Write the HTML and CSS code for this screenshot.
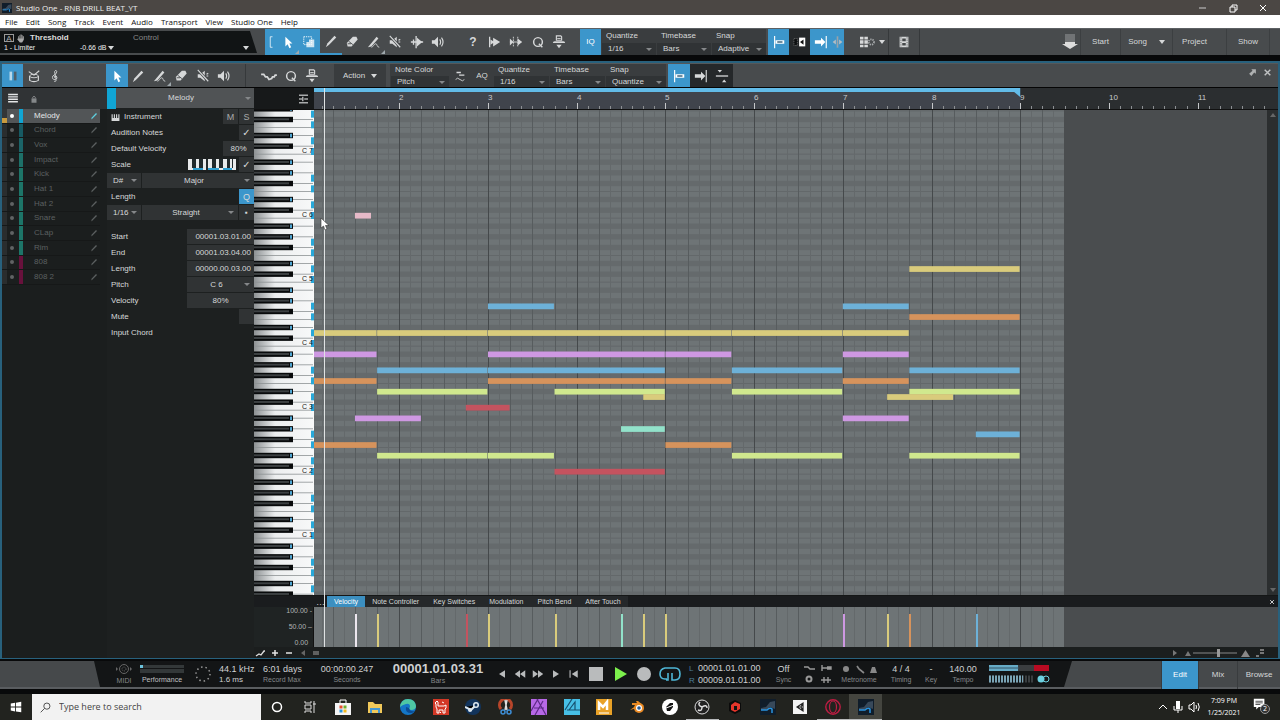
FILE: index.html
```html
<!DOCTYPE html>
<html lang="en">
<head>
<meta charset="utf-8">
<title>Studio One - RNB DRILL BEAT_YT</title>
<link rel="stylesheet" href="styles.css">
</head>
<body>
<svg class="defs" aria-hidden="true">
  <symbol id="arrow" viewBox="0 0 16 16"><path d="M5 2v11l2.6-2.4 2 4.4 2-1-2-4.2H13z" fill="currentColor"/></symbol>
  <symbol id="bracket" viewBox="0 0 16 16"><path d="M10 1H7v14h3" fill="none" stroke="currentColor"/></symbol>
  <symbol id="range" viewBox="0 0 16 16"><path d="M2 2h9v9H2z" fill="none" stroke="currentColor" stroke-dasharray="1.5 1"/><path d="M5 8h3V5h6v9H5z" fill="currentColor" opacity=".75"/></symbol>
  <symbol id="pencil" viewBox="0 0 16 16"><path d="M2 15l2-4.500L12 2l2 2-8.500 8.500z" fill="currentColor"/></symbol>
  <symbol id="eraser" viewBox="0 0 16 16"><path d="M2 9l7-7h4l1.500 3-7 8H3z" fill="currentColor"/><path d="M4 7l5 4M3 10h4" stroke="#45484a" fill="none"/></symbol>
  <symbol id="brush" viewBox="0 0 16 16"><path d="M1 14l10-12 2 2-8 9z" fill="currentColor"/><path d="M5 14c2 0 3-4 5-4s1 4 4 4" fill="none" stroke="currentColor"/></symbol>
  <symbol id="mute" viewBox="0 0 16 16"><path d="M2 6h3l5-4v12l-5-4H2z" fill="currentColor"/><path d="M2 1l12 13" stroke="#45484a" stroke-width="3"/><path d="M2 1l12 13M14 5l-2 1M14 8h-2" stroke="currentColor" stroke-width="1.300"/></symbol>
  <symbol id="speaker" viewBox="0 0 16 16"><path d="M1 6h3l4-4v12l-4-4H1z" fill="currentColor"/><path d="M10 5q2 3 0 6M12 3q3.500 5 0 10" fill="none" stroke="currentColor" stroke-width="1.300"/></symbol>
  <symbol id="split" viewBox="0 0 16 16"><path d="M7 1v14M1 8h14M4 5v6" stroke="currentColor" stroke-width="1.500"/><path d="M8 3l6 5-6 5z" fill="currentColor"/></symbol>
  <symbol id="wave" viewBox="0 0 16 16"><path d="M3 2v12" stroke="currentColor" stroke-width="1.500"/><path d="M4 5l3 2V3l8 5-8 5V9l-3 2z" fill="currentColor"/></symbol>
  <symbol id="wavedot" viewBox="0 0 16 16"><path d="M5 2v12M10 2v12" stroke="currentColor" stroke-dasharray="2 1"/><path d="M1 4l4 4-4 4zM10 4l5 4-5 4z" fill="currentColor"/><path d="M1 8h13" stroke="currentColor"/></symbol>
  <symbol id="q" viewBox="0 0 16 16"><circle cx="8" cy="8" r="5" fill="none" stroke="currentColor" stroke-width="1.700"/><path d="M9 10l4 4" stroke="currentColor" stroke-width="1.700"/></symbol>
  <symbol id="stamp" viewBox="0 0 16 16"><path d="M5 1h5l1 1v4H5z" fill="none" stroke="currentColor" stroke-width="1.300"/><path d="M6 4h4" stroke="currentColor"/><path d="M1 9q0-2 2-2h10q2 0 2 2zM5 11h6l-3 4z" fill="currentColor"/></symbol>
  <symbol id="curve" viewBox="0 0 20 16"><path d="M1 6h3l2 3h2l2 3 3-1 1-2h2l1-2h2" fill="none" stroke="currentColor" stroke-width="2"/></symbol>
  <symbol id="snapa" viewBox="0 0 16 16"><path d="M3 1v14" stroke="currentColor" stroke-width="1.300"/><path d="M4 6h10v4H4z" fill="currentColor"/><path d="M6 8h6" stroke="#24506c" stroke-width="1.500"/></symbol>
  <symbol id="snapb" viewBox="0 0 16 16"><path d="M1 4h4v8H1z" fill="#0d0f10" stroke="#777" stroke-dasharray="1 1"/><path d="M7 3h7v10H7z" fill="#fff"/><path d="M12 5v6L8 8z" fill="#111"/></symbol>
  <symbol id="toend" viewBox="0 0 16 16"><path d="M1 6h7V3l5 5-5 5v-3H1z" fill="currentColor"/><path d="M14 1v14" stroke="currentColor" stroke-width="1.300"/></symbol>
  <symbol id="center" viewBox="0 0 16 16"><path d="M8 1v14" stroke="#9aa3a8" stroke-width="2"/><path d="M2 8l4-3v6zM14 8l-4-3v6z" fill="#b3bcc2"/></symbol>
  <symbol id="gridgear" viewBox="0 0 18 16"><path d="M1 2h4v3H1zM6 2h4v3H6zM1 6h4v4H1zM6 6h4v4H6zM1 11h4v3H1zM6 11h4v3H6z" fill="currentColor"/><circle cx="14" cy="8" r="3" fill="none" stroke="#a5a8aa" stroke-width="2" stroke-dasharray="1.500 1"/></symbol>
  <symbol id="film" viewBox="0 0 16 16"><path d="M3 2h10v12H3z" fill="currentColor"/><path d="M6 4h4v3H6zM6 9h4v3H6z" fill="#45484a"/><path d="M4.500 2v12M11.500 2v12" stroke="#45484a" stroke-dasharray="1 1"/></symbol>
  <symbol id="download" viewBox="0 0 16 16"><path d="M3 1h10M3 3h10M3 5h10M3 7h10" stroke="#999c9e"/><path d="M3 8h10v2h3l-8 5-8-5h3z" fill="#ddd"/></symbol>
  <symbol id="notes" viewBox="0 0 16 16"><path d="M4 3h3v10H4z" fill="#b7d8ea"/><path d="M9 3h3v10H9z" fill="#4e5e68"/></symbol>
  <symbol id="drum" viewBox="0 0 16 16"><ellipse cx="8" cy="8" rx="5" ry="2" fill="none" stroke="currentColor"/><path d="M3 8v5q5 3 10 0V8M2 3l6 4 6-5" fill="none" stroke="currentColor" stroke-width="1.300"/></symbol>
  <symbol id="clef" viewBox="0 0 16 16"><path d="M7 14q3 1 2-3L7.500 3Q9 0 10 2.500T5.500 8q-1.500 4 2.500 4 4-1 1.500-4-3-.5-2 2" fill="none" stroke="currentColor"/></symbol>
  <symbol id="rows" viewBox="0 0 16 16"><path d="M2 3h12M2 6h12M2 9h12M2 12h12" stroke="#e4e6e7" stroke-width="1.700"/></symbol>
  <symbol id="lock" viewBox="0 0 16 16"><path d="M4 7h8v7H4z" fill="#85888a"/><path d="M6 7V5q2-3 4 0v2" fill="none" stroke="#85888a" stroke-width="1.500"/></symbol>
  <symbol id="view" viewBox="0 0 16 16"><path d="M2 3h12M2 13h12M2 8h5M9 8h5M7 5v6" stroke="#a9abac" stroke-width="2"/></symbol>
  <symbol id="humps" viewBox="0 0 16 16"><path d="M4 4h5M7 7h6" stroke="currentColor" stroke-width="1.500"/><path d="M3 12q2-3 5 0t5 0" fill="none" stroke="currentColor"/></symbol>
  <symbol id="center2" viewBox="0 0 16 16"><path d="M1 8h14" stroke="currentColor" stroke-width="1.500"/><path d="M3 1h5L5.500 4zM8 15h5l-2.500-3z" fill="currentColor"/></symbol>
  <symbol id="pop" viewBox="0 0 16 16"><path d="M6 2h8v8l-3-2-5 6-4-4 6-5z" fill="#aeb0b1"/></symbol>
  <symbol id="x" viewBox="0 0 16 16"><path d="M3 3l10 10M13 3L3 13" stroke="currentColor" stroke-width="2.500"/></symbol>
  <symbol id="piano" viewBox="0 0 16 16"><path d="M1 2h2v7h2V2h2v7h2V2h2v7h2V2h2v12H1z" fill="currentColor"/></symbol>
  <symbol id="studio" viewBox="0 0 16 16"><path d="M0 0h16v16H0z" fill="#101d2a"/><path d="M1 9l5-1 4-5 5-1v8l-5-2-4 3H1z" fill="#38495a"/><path d="M1 11h6q3-3 5-1v4" stroke="#2893df" stroke-width="1.500" fill="none"/></symbol>
</svg>

<header class="title"><svg class="app"><use href="#studio"/></svg><span>Studio One - RNB DRILL BEAT_YT</span>
  <div class="winbtns">
    <button aria-label="Minimize"><svg viewBox="0 0 10 10"><path d="M1 5h7" stroke="#ccc"/></svg></button>
    <button aria-label="Restore"><svg viewBox="0 0 10 10"><path d="M2 4h5v5H2zM4 4V2h5v5H7" stroke="#fff" fill="none"/></svg></button>
    <button aria-label="Close"><svg viewBox="0 0 10 10"><path d="M2 2l6 6M8 2L2 8" stroke="#fff"/></svg></button>
  </div>
</header>
<nav class="menu"><button>File</button><button>Edit</button><button>Song</button><button>Track</button><button>Event</button><button>Audio</button><button>Transport</button><button>View</button><button>Studio One</button><button>Help</button></nav>

<section class="bar top">
  <div class="macro">
    <div class="mline"><i class="abox">A</i><svg class="hand" viewBox="0 0 16 16"><path d="M3 8V4h2V2h2V1h2v1h2v2h2v6l-3 5H6L1 9z" fill="#aaa"/><path d="M5 3v5M7.500 2v6M10 3v5" stroke="#111"/></svg><b>Threshold</b><span class="ctl">Control</span></div>
    <div class="mline small"><span>1 - Limiter</span><span class="db">-0.66 dB</span><i class="tri"></i><i class="tri end"></i></div>
  </div>
  <div class="tools on first">
    <button class="thin" aria-label="Bracket"><svg><use href="#bracket"/></svg></button>
    <button aria-label="Arrow" class="corner"><svg><use href="#arrow"/></svg></button>
    <button aria-label="Range"><svg><use href="#range"/></svg></button>
  </div>
  <div class="tools six">
    <button class="under" aria-label="Paint"><svg><use href="#pencil"/></svg></button>
    <button aria-label="Eraser"><svg><use href="#eraser"/></svg></button>
    <button class="corner" aria-label="Brush"><svg><use href="#brush"/></svg></button>
    <button aria-label="Mute"><svg><use href="#mute"/></svg></button>
    <button aria-label="Bend"><svg><use href="#split"/></svg></button>
    <button aria-label="Listen"><svg><use href="#speaker"/></svg></button>
  </div>
  <div class="tools five">
    <button class="ask">?</button>
    <button aria-label="Transient"><svg><use href="#wave"/></svg></button>
    <button aria-label="Slip"><svg><use href="#wavedot"/></svg></button>
    <button aria-label="Quantize"><svg><use href="#q"/></svg></button>
    <button aria-label="Macro"><svg><use href="#stamp"/></svg></button>
  </div>
  <div class="tools on one iq"><button>IQ</button></div>
  <div class="drops">
    <label>Quantize<span class="sel"><select><option>1/16</option></select></span></label>
    <label>Timebase<span class="sel"><select><option>Bars</option></select></span></label>
    <label>Snap<span class="sel"><select><option>Adaptive</option></select></span></label>
  </div>
  <div class="tools four">
    <button class="lit" aria-label="Snap start"><svg><use href="#snapa"/></svg></button>
    <button class="dark" aria-label="Snap event"><svg><use href="#snapb"/></svg></button>
    <button class="lit" aria-label="Snap end"><svg><use href="#toend"/></svg></button>
    <button class="lit narrow" aria-label="Snap center"><svg><use href="#center"/></svg></button>
  </div>
  <div class="extras"><button aria-label="Grid options"><svg><use href="#gridgear"/></svg><i class="tri"></i></button><button aria-label="Video"><svg><use href="#film"/></svg></button></div>
  <div class="pages"><button class="dl" aria-label="Install"><svg><use href="#download"/></svg></button><button>Start</button><button class="song">Song<i class="tri"></i></button><button class="project">Project</button><button class="show">Show</button></div>
</section>

<main class="editor">
  <section class="bar sub">
    <div class="tools modes">
      <button class="lit" aria-label="Piano view"><svg><use href="#notes"/></svg></button>
      <button aria-label="Drum view"><svg><use href="#drum"/></svg></button>
      <button aria-label="Score view"><svg><use href="#clef"/></svg></button>
    </div>
    <div class="tools six">
      <button class="lit" aria-label="Arrow"><svg><use href="#arrow"/></svg></button>
      <button aria-label="Draw"><svg><use href="#pencil"/></svg></button>
      <button class="corner" aria-label="Brush"><svg><use href="#brush"/></svg></button>
      <button aria-label="Eraser"><svg><use href="#eraser"/></svg></button>
      <button aria-label="Mute"><svg><use href="#mute"/></svg></button>
      <button aria-label="Listen"><svg><use href="#speaker"/></svg></button>
    </div>
    <div class="tools three">
      <button aria-label="Curve"><svg class="wide"><use href="#curve"/></svg></button>
      <button aria-label="Quantize"><svg><use href="#q"/></svg></button>
      <button aria-label="Macro"><svg><use href="#stamp"/></svg></button>
    </div>
    <button class="action">Action<i class="tri"></i></button>
    <div class="drops color"><label>Note Color<span class="sel"><select><option>Pitch</option></select></span></label></div>
    <div class="tools two"><button aria-label="Humanize"><svg><use href="#humps"/></svg></button><button>AQ</button></div>
    <div class="drops second">
      <label>Quantize<span class="sel"><select><option>1/16</option></select></span></label>
      <label>Timebase<span class="sel"><select><option>Bars</option></select></span></label>
      <label>Snap<span class="sel"><select><option>Quantize</option></select></span></label>
    </div>
    <div class="tools snaps"><button class="lit" aria-label="Snap start"><svg><use href="#snapa"/></svg></button><button class="dark" aria-label="Snap end"><svg><use href="#toend"/></svg></button><button class="dark" aria-label="Center"><svg><use href="#center2"/></svg></button></div>
    <div class="panelbtns"><button aria-label="Detach"><svg><use href="#pop"/></svg></button><button aria-label="Close"><svg><use href="#x"/></svg></button></div>
  </section>

  <div class="body">
    <aside class="tracks">
      <div class="thead"><svg class="rowsico"><use href="#rows"/></svg><svg><use href="#lock"/></svg></div>
      <ul id="tracks"></ul>
    </aside>

    <aside class="inspector">
      <div class="ihead"><i></i><span class="sel"><select aria-label="Part"><option>Melody</option></select></span></div>
      <div class="row"><svg class="pi"><use href="#piano"/></svg><span class="grow">Instrument</span><button class="cell ms">M</button><button class="cell ms">S</button></div>
      <div class="row"><label class="grow" for="aud">Audition Notes</label><input id="aud" type="checkbox" checked></div>
      <div class="row"><label class="grow" for="dv">Default Velocity</label><input id="dv" class="cell dv" value="80%"></div>
      <div class="row"><label class="grow" for="sc">Scale</label><svg class="scale" viewBox="0 0 48 11"><path d="M0 0h48v11H0z" fill="#e8eaeb"/><path d="M5 9h10v2H5zM19 9h12v2H19zM35 9h9v2h-9z" fill="#2f9fd0"/><path d="M4 0h4v9H4zM11 0h4v9h-4zM18 0h2v11h-2zM24 0h4v9h-4zM31 0h4v9h-4zM39 0h3v9h-3zM44 0h1v9h-1z" fill="#222a2c"/></svg><input id="sc" type="checkbox" checked></div>
      <div class="row split"><span class="sel key"><select aria-label="Key"><option>D#</option></select></span><span class="sel grow mid"><select aria-label="Scale type"><option>Major</option></select></span></div>
      <div class="row"><span class="grow">Length</span><button class="qbtn">Q</button></div>
      <div class="row split"><span class="sel key"><select aria-label="Length value"><option>1/16</option></select></span><span class="sel grow mid"><select aria-label="Feel"><option>Straight</option></select></span><button class="cell dot" aria-label="Dotted">▪</button></div>
      <div class="row gap"><label class="grow" for="st">Start</label><input id="st" class="cell val" value="00001.03.01.00"></div>
      <div class="row"><label class="grow" for="en">End</label><input id="en" class="cell val" value="00001.03.04.00"></div>
      <div class="row"><label class="grow" for="le">Length</label><input id="le" class="cell val" value="00000.00.03.00"></div>
      <div class="row"><label class="grow" for="pt">Pitch</label><span class="sel val"><select id="pt"><option>C 6</option></select></span></div>
      <div class="row"><label class="grow" for="ve">Velocity</label><input id="ve" class="cell val center" value="80%"></div>
      <div class="row"><label class="grow" for="mu">Mute</label><input id="mu" type="checkbox"></div>
      <div class="row"><span class="grow">Input Chord</span></div>
    </aside>

    <section class="roll">
      <div class="line ruler"><div class="gut"><svg><use href="#view"/></svg></div><svg id="ruler" class="fill"></svg></div>
      <div class="line piano"><svg id="keys" class="keys"></svg><svg id="grid" class="fill"></svg><div class="scroll"><i class="up"></i><i class="down"></i></div></div>
      <div class="line tabs"><div class="gut">…</div><button class="lit">Velocity</button><button>Note Controller</button><button>Key Switches</button><button>Modulation</button><button>Pitch Bend</button><button>After Touch</button><button class="close" aria-label="Close lane"><svg><use href="#x"/></svg></button></div>
      <div class="line lane"><div class="gut scaleax"><span>100.00 -</span><span>50.00 –</span><span>0.00 &nbsp;</span></div><svg id="lane" class="fill"></svg></div>
      <div class="line foot">
        <svg class="footl" viewBox="0 0 70 10"><path d="M2 8l3-2 2 1 3-4h1" stroke="#ddd" fill="none" stroke-width="1.300"/><path d="M18 5h6M21 2v6M32 5h6" stroke="#e4e4e4" stroke-width="1.500"/><path d="M51 2v6l-4-3z" fill="#666"/><path d="M59 4h6M59 6h6" stroke="#777" stroke-width="1.500"/></svg>
        <svg class="footr" viewBox="0 0 100 10"><path d="M7 2v6l4-3zM19 8h6l-3-5z" fill="#777"/><path d="M27 5h44" stroke="#888"/><path d="M51 1h3v8h-3z" fill="#999"/><path d="M75 9h9l-4.500-7z" fill="#888"/><path d="M90 8h3M94 2h4M94 5h4" stroke="#777" stroke-width="2"/></svg>
      </div>
      <i class="playhead"></i>
      <svg class="cursor" viewBox="0 0 10 14"><path d="M1 1v10l2.500-2 1.500 4 2-1-1.500-3.500H9z" fill="#fff" stroke="#333" stroke-width=".6"/></svg>
    </section>
  </div>
</main>

<section class="transport">
  <div class="slab"></div>
  <div class="disp">
    <div class="c"><svg class="i20" viewBox="0 0 20 12"><circle cx="10" cy="6" r="4.500" fill="none" stroke="#666"/><circle cx="10" cy="6" r="2" fill="none" stroke="#666" stroke-dasharray="1 1"/><path d="M2 4v4l2-2zM16 4v4l2-2z" fill="#666"/></svg><small>MIDI</small></div>
    <div class="c"><svg class="perf" viewBox="0 0 44 8"><path d="M0 0h44v3H0zM0 4h44v4H0z" fill="#333839"/><path d="M0 0h3v3H0z" fill="#6cc4de"/></svg><small class="lt">Performance</small></div>
    <div class="c"><svg class="i16" viewBox="0 0 16 16"><circle cx="8" cy="8" r="7" fill="none" stroke="#999" stroke-width="1.500" stroke-dasharray="1.500 2.900"/></svg></div>
    <div class="c l"><span>44.1 kHz</span><span class="ms8">1.6 ms</span></div>
    <div class="c l"><span>6:01 days</span><small>Record Max</small></div>
    <div class="c"><span>00:00:00.247</span><small>Seconds</small></div>
    <div class="c"><strong>00001.01.03.31</strong><small>Bars</small></div>
    <div class="ctrls">
      <button aria-label="Back"><svg viewBox="0 0 16 16"><path d="M12 3v10L4 8z"/></svg></button>
      <button aria-label="Rewind"><svg viewBox="0 0 16 16"><path d="M8 3v10L1 8zM15 3v10L8 8z"/></svg></button>
      <button aria-label="Fast forward"><svg viewBox="0 0 16 16"><path d="M1 3v10l7-5zM8 3v10l7-5z"/></svg></button>
      <button aria-label="Forward"><svg viewBox="0 0 16 16"><path d="M4 3v10l8-5z"/></svg></button>
      <button aria-label="Return to zero"><svg viewBox="0 0 16 16"><path d="M2 3h1.500v10H2zM13 3v10L5 8z"/></svg></button>
      <button class="big" aria-label="Stop"><svg viewBox="0 0 16 16"><path d="M1 1h14v14H1z"/></svg></button>
      <button class="big" aria-label="Play"><svg viewBox="0 0 16 16"><path d="M3 1v14l12-7z" fill="#7cf04c"/></svg></button>
      <button class="big" aria-label="Record"><svg viewBox="0 0 16 16"><circle cx="8" cy="8" r="7"/></svg></button>
      <button class="loop" aria-label="Loop"><svg viewBox="0 0 22 16"><path d="M8 13H6q-5 0-5-5t5-6h10q5 0 5 6t-5 6h-3V7M9 7v7H7" fill="none" stroke="#4fb6d6" stroke-width="1.600"/></svg></button>
    </div>
    <div class="c l loc"><span><em>L</em>00001.01.01.00</span><span><em>R</em>00009.01.01.00</span></div>
    <div class="c"><span>Off</span><small>Sync</small></div>
    <div class="c"><svg class="i30" viewBox="0 0 30 24"><path d="M2 5h4l2 2h5M20 3v6M20 6h9M25 5h4v2h-4M19 18h10M22 15v6M26 15v6" stroke="#999" stroke-width="1.400" fill="none"/><circle cx="7" cy="17" r="2.500" fill="none" stroke="#999" stroke-width="2"/></svg></div>
    <div class="c"><svg class="i38" viewBox="0 0 38 10"><circle cx="6" cy="5" r="3" fill="#888"/><path d="M17 2l2 3 5 4" stroke="#888" stroke-width="1.700" fill="none"/><path d="M30 9l2-6h3l2 6z" fill="#888"/></svg><small>Metronome</small></div>
    <div class="c"><span>4 / 4</span><small>Timing</small></div>
    <div class="c"><span>-</span><small>Key</small></div>
    <div class="c"><span>140.00</span><small>Tempo</small></div>
    <div class="c"><svg class="meter" viewBox="0 0 62 20"><path d="M0 1h46v6H0z" fill="#3a3d3f"/><path d="M0 1h29v6H0z" fill="#66abc6"/><path d="M0 4h30" stroke="#356"/><path d="M45 1h15v6H45z" fill="#b80b22"/><path d="M0 15h45" stroke="#3a3e40" stroke-width="7" stroke-dasharray="2 1"/><path d="M0 15h34" stroke="#7aa4b5" stroke-width="7" stroke-dasharray="2 1"/><circle cx="52" cy="15" r="3.500" fill="#6cd0e0"/><circle cx="57" cy="15" r="3" fill="none" stroke="#6cd0e0"/></svg></div>
  </div>
  <div class="views"><button class="lit">Edit</button><button>Mix</button><button>Browse</button></div>
</section>

<footer class="taskbar">
  <button class="win" aria-label="Start"><svg viewBox="0 0 16 16"><path d="M2 4l5-1v4.500H2zM8 3l6-1v5.500H8zM2 8.500h5V13l-5-1zM8 8.500h6V14l-6-1z" fill="#fff"/></svg></button>
  <label class="search"><svg viewBox="0 0 16 16"><circle cx="10" cy="6" r="4.500" fill="none" stroke="#333" stroke-width="1.200"/><path d="M6.500 9.500L1 15" stroke="#333" stroke-width="1.200"/></svg><input placeholder="Type here to search" aria-label="Search"></label>
  <div class="apps">
    <button aria-label="Cortana"><svg viewBox="0 0 16 16"><circle cx="8" cy="8" r="4.500" fill="none" stroke="#fff" stroke-width="1.500"/></svg></button>
    <button aria-label="Task view"><svg viewBox="0 0 16 16"><path d="M3 2v2h6V2M3 14v-2h6v2M3 6h6v4H3zM12 2v12M11 5h3" fill="none" stroke="#ddd"/></svg></button>
    <button aria-label="Store"><svg viewBox="0 0 16 16"><path d="M5 4V1h6v3" fill="none" stroke="#fff"/><path d="M0 4h16v12H0z" fill="#f5f5f5"/><path d="M4.500 6.500h3v3h-3z" fill="#e64b2b"/><path d="M8.500 6.500h3v3h-3z" fill="#6fae2c"/><path d="M4.500 10.500h3v3h-3z" fill="#2896dc"/><path d="M8.500 10.500h3v3h-3z" fill="#f5b91c"/></svg></button>
    <button aria-label="Explorer"><svg viewBox="0 0 16 16"><path d="M1 3h5l2 2h7v9H1z" fill="#f1c95a"/><path d="M3 14V9h10v5h-2v-3H5v3z" fill="#4497d2"/></svg></button>
    <button aria-label="Edge"><svg viewBox="0 0 16 16"><circle cx="8" cy="8" r="8" fill="#1476c6"/><path d="M0 8Q1 0 8 0t8 7q0 4-5 4-3-1-1-3 0-4-4-3T0 8z" fill="#4ec7a3"/><path d="M6 8q-1 6 5 6 3 0 4-2-5 1-6-3z" fill="#0c4c94"/></svg></button>
    <button aria-label="Llama"><svg viewBox="0 0 16 16"><path d="M0 0h16v16H0z" fill="#d33826"/><path d="M2 4l2-2 1 1v4h6l2-1v3l-1 1v4h-2v-3H6v3H4v-4L3 8V5zM9 3l2 1M8 13l-1 1" fill="none" stroke="#fff"/></svg></button>
    <button aria-label="Steam"><svg viewBox="0 0 16 16"><circle cx="8" cy="8" r="8" fill="#12345c"/><path d="M0 8l6 3 5-5" stroke="#dce7ef" stroke-width="2"/><circle cx="11" cy="6" r="3" fill="#dce7ef"/><circle cx="11" cy="6" r="1.500" fill="#12345c"/><circle cx="5" cy="11" r="2" fill="#dce7ef"/></svg></button>
    <button aria-label="Snip"><svg viewBox="0 0 16 16"><path d="M3 10a6 6 0 1 1 9 0" fill="none" stroke="#b8452a" stroke-width="3"/><path d="M7 1l2 10M9 1L7 11" stroke="#ddd" stroke-width="1.500"/><circle cx="5" cy="13" r="2" fill="none" stroke="#3e8ed6" stroke-width="1.500"/><circle cx="11" cy="13" r="2" fill="none" stroke="#3e8ed6" stroke-width="1.500"/></svg></button>
    <button aria-label="Affinity Photo"><svg viewBox="0 0 16 16"><path d="M0 0h16v16H0z" fill="#b768e6"/><path d="M6 0l9 16M0 12L7 0M3 9h10M4 16l8-14" stroke="#5d2a86" stroke-width="1.200"/></svg></button>
    <button aria-label="Affinity Designer"><svg viewBox="0 0 16 16"><path d="M0 0h16v16H0z" fill="#47bfe5"/><path d="M1 11L8 0M3 11h13M5 11l6-8v8" stroke="#17506e" stroke-width="1.200" fill="none"/></svg></button>
    <button aria-label="Mod"><svg viewBox="0 0 16 16"><path d="M0 0h16v16H0z" fill="#e9a227"/><path d="M3 11V4l4 4 4-5v8" fill="none" stroke="#fff" stroke-width="2.500"/><path d="M3 14h10" stroke="#fff"/></svg></button>
    <button aria-label="Blender"><svg viewBox="0 0 16 16"><path d="M1 11l7-5H3V4h5L7 2h2l6 5z" fill="#e98a24"/><circle cx="10" cy="9" r="5" fill="#e98a24"/><circle cx="10" cy="9" r="3" fill="#fff"/><circle cx="10" cy="9" r="1.800" fill="#275b95"/></svg></button>
    <button aria-label="Splice"><svg viewBox="0 0 16 16"><circle cx="8" cy="8" r="8" fill="#fff"/><path d="M4 8l4-4h3v4l-3 4H5z" fill="#111"/><path d="M4 9l8-3" stroke="#fff"/></svg></button>
    <button class="run" aria-label="OBS"><svg viewBox="0 0 16 16"><circle cx="8" cy="8" r="7" fill="#222" stroke="#ddd"/><path d="M8 8Q3 6 6 3M8 8q0 5-4 3M8 8q5-3 5 1" fill="none" stroke="#ddd" stroke-width="1.500"/></svg></button>
    <button aria-label="Cube"><svg viewBox="0 0 16 16"><path d="M8 1l6 3v8l-6 3-6-3V4z" fill="#0b0b0b"/><path d="M8 3l5 2v5l-5 3-4-2V6z" fill="#e5362b"/><path d="M7 7h3v4H7z" fill="#111"/></svg></button>
    <button aria-label="Studio One"><svg><use href="#studio"/></svg></button>
    <button aria-label="Unity"><svg viewBox="0 0 16 16"><path d="M1 1h14v14H1z" fill="#f3f3f3"/><path d="M11 4v8L5 8zM5 8h4l2-4M9 8l2 4" fill="none" stroke="#222" stroke-width="1.200"/></svg></button>
    <button class="run" aria-label="Opera"><svg viewBox="0 0 16 16"><circle cx="8" cy="8" r="7.200" fill="none" stroke="#bd1d43" stroke-width="1.400"/><ellipse cx="8" cy="8" rx="3.500" ry="6" fill="none" stroke="#bd1d43" stroke-width="1.200"/></svg></button>
    <button class="run cur" aria-label="Studio One window"><svg><use href="#studio"/></svg></button>
  </div>
  <div class="tray">
    <svg class="trayico" viewBox="0 0 44 16"><path d="M2 10l4-4 4 4" fill="none" stroke="#fff"/><path d="M19 2h4v8h-4z" fill="#fff"/><path d="M17 7v4h8V7M21 11v3" fill="none" stroke="#fff"/><path d="M32 6h2l3-3v10l-3-3h-2z" fill="none" stroke="#fff"/><path d="M39 6q1 2 0 4M41 4q2.500 4 0 8" fill="none" stroke="#fff"/></svg>
    <time>7:09 PM<br>1/25/2021</time>
    <button class="note" aria-label="Notifications"><svg viewBox="0 0 16 16"><path d="M1 1h13v10H7l-3 3v-3H1z" fill="#fff"/><path d="M3 4h9M3 6h9M3 8h6" stroke="#333"/></svg><span>2</span></button>
  </div>
</footer>
<script src="app.js"></script>
</body>
</html>
```

FILE: styles.css
```css
* { box-sizing: border-box; }
body { margin: 0; min-height: 100vh; display: flex; flex-direction: column; background: #08090a; color: #d6d8d9; font: 8px/10px "Liberation Sans", Arial, sans-serif; overflow: hidden; }
button, select, input { font: inherit; color: inherit; background: none; border: 0; padding: 0; margin: 0; border-radius: 0; outline: 0; min-width: 0; }
button { display: flex; align-items: center; justify-content: center; }
select { appearance: none; width: 100%; height: 100%; }
.defs { position: absolute; width: 0; height: 0; }
i, em { font-style: normal; }
.tri { width: 0; height: 0; border: 3px solid transparent; border-top: 4px solid #d6d8d9; border-bottom: 0; }
.lit { background: #3c96cb; color: #fff; }

.title { height: 15px; background: #4b4744; display: flex; align-items: center; padding-left: 2px; gap: 4px; font-family: "Open Sans", sans-serif; color: #eee; }
.app { width: 10px; height: 10px; }
.winbtns { margin-left: auto; display: flex; padding-right: 2px; }
.winbtns button { width: 30px; height: 15px; }
.winbtns svg { width: 10px; height: 10px; }
.menu { height: 13px; background: #fff; color: #111; display: flex; padding-left: 5px; gap: 8px; font-family: "Open Sans", sans-serif; }

.bar { display: flex; background: #484b4d; flex: none; }
.top { height: 27px; border-top: 1px solid #5c6063; margin-bottom: 6px; }
.macro { width: 257px; background: #111415; clip-path: polygon(0 0, 250px 0, 100% 100%, 0 100%); margin: 2px 8px 2px 0; padding: 2px 8px 0 4px; }
.mline { display: flex; align-items: center; height: 10px; }
.mline.small { font-size: 7px; color: #eee; }
.mline b { width: 103px; color: #ddd; }
.abox { border: 1px solid #999; width: 10px; height: 8px; line-height: 7px; text-align: center; color: #aaa; }
.hand { width: 10px; height: 9px; margin: 0 4px 0 2px; }
.ctl { color: #888; }
.small span:first-child { width: 60px; }
.small .db { margin-left: 16px; margin-right: 2px; }
.tri.end { margin-left: auto; }
.tools { display: flex; flex: none; }
.tools button { flex: 1; position: relative; }
.tools svg { width: 14px; height: 14px; }
.tools .wide { width: 18px; }
.tools.on { background: #3c96cb; color: #fff; }
.first { width: 55px; }
.tools .thin { flex: 0 0 12px; }
.corner::after { content: ""; position: absolute; right: 0; bottom: 1px; border: 2px solid transparent; border-right-color: #9fa8ad; border-bottom-color: #9fa8ad; }
.under { border-bottom: 2px solid #3c96cb; }
.six { width: 129px; }
.five { width: 108px; margin: 0 10px 0 13px; }
.ask { font-size: 12px; font-weight: bold; }
.one { width: 21px; }
.drops { display: flex; gap: 1px; background: #3a3d3f; margin-right: 2px; padding-left: 1px; }
.drops label { width: 54px; display: flex; flex-direction: column; padding-top: 2px; gap: 2px; text-indent: 4px; }
.sel { position: relative; display: block; background: #303335; height: 12px; }
.sel::after { content: ""; position: absolute; right: 4px; top: 5px; border: 3px solid transparent; border-top: 3px solid #85888a; border-bottom: 0; pointer-events: none; }
.sel select { padding-left: 2px; text-indent: 0; }
.four { width: 76px; }
.tools .narrow { flex: 0 0 13px; }
.dark { background: #25282a; }
.extras { display: flex; margin-left: 12px; }
.extras button { border-right: 1px solid #36393b; width: 31px; gap: 4px; }
.extras svg { width: 16px; height: 14px; flex: none; }
.extras button:first-child { width: 33px; }
.pages { display: flex; margin-left: auto; padding-right: 10px; }
.pages button { border-right: 1px solid #3c3f41; width: 40px; }
.pages .dl { width: 22px; }
.pages svg { width: 16px; height: 16px; }
.pages .song { width: 52px; gap: 12px; }
.pages .project { width: 54px; padding-right: 10px; }
.pages .show { width: 43px; }

.editor { flex: 1; min-height: 0; display: flex; flex-direction: column; border: 1px solid #28617d; border-width: 2px 2px 1px 2px; background: #1a1d1e; margin-bottom: 2px; }
.sub { height: 24px; border-top: 1px solid #55585a; }
.modes { width: 64px; margin-right: 40px; }
.three { width: 78px; margin-left: 10px; padding-left: 12px; border-left: 1px solid #36393b; }
.action { width: 52px; margin-left: 11px; background: #393c3e; gap: 6px; }
.sub .drops label { padding-top: 1px; gap: 1px; }
.color { margin-left: 4px; }
.color label { width: 58px; }
.two { width: 44px; background: #3a3d3f; margin-left: -2px; }
.sub .second label { width: 55px; }
.sub .second label:last-child { width: 60px; }
.snaps { width: 65px; }
.panelbtns { margin-left: auto; display: flex; gap: 6px; padding-right: 6px; align-items: flex-start; padding-top: 4px; }
.panelbtns svg { width: 9px; height: 9px; display: block; color: #c0c2c3; }

.body { flex: 1; min-height: 0; display: flex; border-top: 1px solid #050505; }
.tracks { width: 105px; background: #1b1e1e; flex: none; }
.thead { height: 21px; background: #303335; display: flex; align-items: center; gap: 9px; padding-left: 4px; }
.thead svg { width: 10px; height: 10px; }
.thead .rowsico { width: 14px; height: 13px; }
.tracks ul { list-style: none; margin: 0; padding: 0; height: 176px; display: grid; grid-auto-rows: 1fr; }
.tracks li { display: flex; align-items: center; color: #5c6061; margin-right: 7px; border-bottom: 1px solid #161818; }
.tracks .lev { width: 5px; align-self: stretch; background: #2a2d2e; margin-right: 3px; }
.tracks .rec { width: 4px; height: 4px; border-radius: 2px; background: #606364; margin-right: 5px; }
.tracks .col { width: 4px; align-self: stretch; margin-right: 11px; }
.tracks li svg { width: 8px; height: 8px; margin: 0 2px 0 auto; }
.tracks li.cur { background: #525557; color: #e4e6e7; }
.tracks .cur .lev { background: linear-gradient(#343637 0 65%, #c99a3e 0); }
.tracks .cur .rec { background: #fff; }
.tracks .cur svg { color: #5ed0e0; }
.inspector { width: 147px; background: #1d2020; flex: none; display: flex; flex-direction: column; }
.ihead { height: 21px; display: flex; }
.ihead i { width: 9px; background: #10a5d4; }
.ihead .sel { flex: 1; height: 20px; background: #505355; }
.ihead .sel::after { top: 9px; right: 3px; }
.ihead select { text-align: center; padding-right: 10px; }
.row { height: 16px; display: flex; align-items: stretch; padding-left: 4px; line-height: 16px; gap: 1px; }
.row .cell, .row .sel, .row input[type=checkbox] { height: 15px; background: #303334; }
.row.split { padding-left: 0; }
.row .sel::after { top: 6px; }
.grow { flex: 1; min-width: 0; }
.row.gap { margin-top: 8px; }
.pi { width: 9px; height: 9px; margin: 4px 3px 0 0; }
.row .ms { width: 15px; font-size: 9px; color: #aaa; }
.row input[type=checkbox] { appearance: none; width: 15px; }
.row input:checked::after { content: "✓"; display: block; text-align: center; font: bold 10px/15px "DejaVu Sans", sans-serif; }
.dv { width: 31px; text-align: center; }
.scale { width: 48px; height: 11px; margin: 2px 2px 0 0; }
.row .key { width: 34px; }
.key select { padding-left: 6px; }
.mid select { text-align: center; padding-right: 24px; padding-left: 16px; }
.qbtn { width: 15px; background: #3c96cb; height: 15px; font-size: 9px; }
.dot { width: 15px; }
.val { width: 67px; text-align: right; padding-right: 3px; }
.val.center { text-align: center; padding-right: 0; }
.val select { text-align: center; padding-right: 10px; }
.row .sel.val { padding: 0; }

.roll { flex: 1; min-width: 0; display: flex; flex-direction: column; position: relative; overflow: hidden; background: #1b1e1e; }
.line { display: flex; flex: none; }
.gut { width: 60px; flex: none; display: flex; align-items: center; justify-content: flex-end; padding-right: 4px; }
.fill { flex: 1; min-width: 0; height: 100%; display: block; }
.ruler { height: 22px; background: #2b2e30; border-bottom: 1px solid #111; }
.ruler .gut { background: #17191a; }
.ruler .gut svg { width: 13px; height: 12px; }
.line.piano { flex: 1 1 0; min-height: 0; }
.keys { width: 60px; height: 100%; flex: none; }
.scroll { width: 11px; background: #2b2e2f; display: flex; flex-direction: column; justify-content: space-between; align-items: center; padding: 3px 0; }
.up, .down { border: 3px solid transparent; border-bottom: 4px solid #666; border-top: 0; }
.down { transform: rotate(180deg); }
.tabs { height: 12px; background: #1a1c1e; font-size: 7px; border-top: 1px solid #151717; }
.tabs .gut { width: 73px; color: #ccc; padding-right: 2px; font-size: 9px; }
.tabs button { padding: 0 7px; background: #25282a; }
.tabs button.lit { background: #3c8fc0; }
.tabs .close { margin-left: auto; background: none; padding: 0 3px; }
.tabs .close svg { width: 6px; height: 6px; }
.lane { height: 40px; }
.lane .gut { flex-direction: column; align-items: flex-end; justify-content: space-between; padding: 0 1px 0 0; background: #1f2323; color: #b0b3b4; font-size: 7px; line-height: 8px; border-right: 1px solid #111; }
.foot { height: 11px; justify-content: space-between; align-items: center; }
.footl { width: 70px; height: 10px; }
.footr { width: 100px; height: 10px; margin-right: 12px; }
.playhead { position: absolute; left: 70px; top: 0; bottom: 11px; width: 1px; background: #dfe2e3; }
.cursor { position: absolute; left: 66px; top: 129px; width: 10px; height: 14px; }
#keys text { font-size: 7px; fill: #222; text-anchor: end; }
#ruler text { font-size: 8px; fill: #c9cbcd; }

.transport { height: 28px; flex: none; display: flex; background: #46494b; border-bottom: 2px solid #5a5d60; margin-bottom: 5px; }
.slab { width: 94px; }
.disp { flex: none; width: 978px; background: #131516; clip-path: polygon(0 0, 100% 0, calc(100% - 8px) 100%, 6px 100%); padding-left: 17px; display: grid; grid-template-columns: 26px 50px 32px 44px 48px 72px 110px 196px 78px 33px 34px 50px 34px 26px 38px 76px; align-items: center; color: #cfd1d2; font-size: 9px; }
.c { display: flex; flex-direction: column; align-items: center; justify-content: center; gap: 1px; }
.c.l { align-items: flex-start; }
.c span { white-space: nowrap; }
.c small { font-size: 7px; line-height: 9px; color: #85888a; white-space: nowrap; }
.c small.lt { color: #c0c2c3; }
.c .ms8 { font-size: 8px; }
.c strong { font-size: 13px; line-height: 12px; font-weight: bold; }
.c em { color: #4c7e9a; display: inline-block; width: 9px; font-size: 8px; }
.i20 { width: 20px; height: 12px; }
.perf { width: 44px; height: 8px; margin: 1px 0; }
.i16 { width: 16px; height: 16px; }
.i30 { width: 30px; height: 24px; }
.i38 { width: 38px; height: 10px; }
.meter { width: 62px; height: 20px; }
.ctrls { display: flex; align-items: center; gap: 6px; padding-left: 3px; }
.ctrls svg { width: 12px; height: 12px; fill: #b9bbbc; }
.ctrls .big svg { width: 16px; height: 16px; }
.ctrls .big { margin-left: 2px; }
.ctrls .loop { margin-left: 1px; }
.ctrls .loop svg { width: 22px; height: 16px; }
.views { margin-left: auto; display: flex; margin-bottom: -2px; }
.views button { width: 39px; border-left: 1px solid #393c3e; }
.views button:first-child { width: 37px; }
.views button:last-child { width: 43px; }

.taskbar { height: 26px; flex: none; background: #22231f; display: flex; align-items: stretch; font-family: "Open Sans", sans-serif; }
.win { width: 32px; }
.win svg { width: 14px; height: 14px; }
.search { width: 229px; background: #f2f2f2; display: flex; align-items: center; padding-left: 8px; gap: 8px; color: #333; font-size: 9px; }
.search svg { width: 11px; height: 11px; }
.search input { flex: 1; }
.search input::placeholder { color: #444; opacity: 1; }
.apps { width: 621px; display: flex; }
.apps button { flex: 1; border-bottom: 1px solid transparent; }
.apps svg { width: 16px; height: 16px; }
.apps .run { border-bottom-color: #b9bbbc; }
.apps .cur { background: #44453f; }
.tray { margin-left: auto; display: flex; align-items: center; gap: 5px; padding-right: 5px; color: #fff; }
.trayico { width: 44px; height: 16px; }
.tray time { font-size: 7px; line-height: 12px; text-align: center; width: 36px; }
.note { position: relative; width: 22px; height: 18px; margin-left: 6px; justify-content: flex-start; align-items: flex-start; }
.note svg { width: 13px; height: 13px; }
.note span { position: absolute; left: 7px; top: 6px; width: 10px; height: 10px; border-radius: 5px; background: #333; border: 1px solid #999; font: 7px/8px "Open Sans", sans-serif; }
```

FILE: app.js
```js
const BAR = 88.7, BEAT = BAR / 4, X0 = -3.4, SEMI = 64 / 12, C6 = 105.5, WIDTH = 750;
const C = { y: '#d9cb7c', p: '#ce98e2', b: '#6db1d8', o: '#d6935c', l: '#d0e88e', r: '#c4535f', m: '#92e2ca', k: '#e6b9c8', w: '#ece6ee' };
const rect = (x, y, w, h, f) => `<rect x="${x}" y="${y}" width="${w}" height="${h}" fill="${f}"/>`;
const beatX = b => X0 + b * BEAT;
const pitchY = p => C6 + (84 - p) * SEMI;
const isBlack = p => [1, 3, 6, 8, 10].includes(((p % 12) + 12) % 12);
const el = id => document.getElementById(id);

const tracks = [['Melody', '#10a5d4'], ['Chord', '#175a63'], ['Vox', '#1b6468'], ['Impact', '#1d7068'], ['Kick', '#1d7568'], ['Hat 1', '#1d7568'], ['Hat 2', '#1d7568'], ['Snare', '#1d7568'], ['CLap', '#1d7568'], ['Rim', '#1d7568'], ['808', '#68113c'], ['808 2', '#68113c']];
el('tracks').innerHTML = tracks.map(([n, c], i) => `<li class="${i ? '' : 'cur'}"><i class="lev"></i><i class="rec"></i><i class="col" style="background:${c}"></i>${n}<svg><use href="#pencil"/></svg></li>`).join('');

let s = rect(0, 0, beatX(32), 21, '#40444c') + rect(0, 0, beatX(32), 4, '#62bbe8') + `<path d="M${beatX(32) - 6} 4h6v5z" fill="#62bbe8"/>`;
for (let i = 1; i < 87; i++) {
  const x = Math.round(beatX(i / 2)), bar = i % 8 === 0;
  s += rect(x, bar ? 15 : 18, 1, bar ? 6 : 3, bar ? '#c5c7c9' : '#8d9093');
  if (bar) s += `<text x="${x}" y="12">${i / 8 + 1}</text>`;
}
el('ruler').innerHTML = s;

s = rect(0, 0, '100%', '100%', '#4a4d4f') + rect(0, 0, WIDTH, '100%', '#6e7476');
for (let p = 8; p < 105; p++) {
  const y = pitchY(p) - SEMI / 2;
  if (isBlack(p)) s += rect(0, y, WIDTH, SEMI, '#656a6c');
  if (p % 12 === 0 || p % 12 === 5) s += rect(0, y + SEMI - 0.5, WIDTH, 1, '#63686a');
}
const lines = () => {
  let g = '';
  for (let i = 1; i < 68; i++) g += rect(Math.round(beatX(i / 2)), 0, 1, '100%', i % 8 === 0 ? '#45494b' : i % 2 ? '#64696b' : '#575c5e');
  return g;
};
s += lines();
const notes = [[84, 2, .75, 'k'], [74, 27, 5, 'y'], [67, 8, 3, 'b'], [67, 24, 3, 'b'], [65, 27, 5, 'o'],
  [62, 0, 3, 'y'], [62, 3, 5, 'y'], [62, 8, 8, 'y'], [62, 16, 3, 'y'], [62, 19, 5, 'y'], [62, 24, 3, 'y'],
  [58, 0, 3, 'p'], [58, 8, 8, 'p'], [58, 16, 3, 'p'], [58, 24, 3, 'p'],
  [55, 3, 5, 'b'], [55, 8, 8, 'b'], [55, 19, 5, 'b'], [55, 27, 5, 'b'],
  [53, 0, 3, 'o'], [53, 8, 8, 'o'], [53, 16, 3, 'o'], [53, 24, 3, 'o'],
  [51, 3, 5, 'l'], [51, 11, 5, 'l'], [51, 19, 5, 'l'], [51, 27, 5, 'l'],
  [50, 15, 1, 'y'], [50, 26, 3, 'y'], [48, 7, 2, 'r'], [46, 2, 3, 'p'], [46, 24, 3, 'p'],
  [44, 14, 2, 'm'], [43, 30, 2, 'b'], [41, 0, 3, 'o'], [41, 16, 3, 'o'],
  [39, 3, 5, 'l'], [39, 8, 3, 'l'], [39, 19, 5, 'l'], [39, 27, 5, 'l'], [36, 11, 5, 'r']];
for (const [p, b, len, c] of notes) s += rect(beatX(b), pitchY(p) - SEMI / 2, len * BEAT - 0.6, SEMI + 0.4, C[c]);
el('grid').innerHTML = s;

s = '<defs><linearGradient id="kg"><stop offset="0" stop-color="#8d9193"/><stop offset=".35" stop-color="#eceeef"/><stop offset="1" stop-color="#f8f9f9"/></linearGradient></defs>' + rect(0, 0, 60, '100%', 'url(#kg)');
let labels = '';
for (let p = 8; p < 105; p++) {
  const y = pitchY(p), n = p % 12;
  if (n === 0 || n === 5) s += rect(0, y + SEMI / 2 - .4, 59, .8, '#8d9294');
  if (isBlack(p)) {
    s += rect(0, y - .4, 59, .8, '#8d9294') + rect(0, y - 2.7, 39, 5.4, '#080a0b') + rect(0, y - 1.2, 35, 2, '#3c4042');
    if (n === 3 || n === 8 || n === 10) s += rect(36, y - 1.7, 2, 3.6, '#4fa7d4');
  } else if (n === 0 || n === 2 || n === 5 || n === 7) s += rect(57, y - 3.5, 3, 7, '#28a8d8');
  if (n === 0 && p > 20 && p < 100) labels += `<text x="59" y="${y + 1}">C ${p / 12 - 1}</text>`;
}
el('keys').innerHTML = s + labels;

s = rect(0, 0, '100%', '100%', '#4a4d4f') + rect(0, 0, WIDTH, '100%', '#6e7476') + lines();
for (const [b, c] of [[2, 'w'], [3, 'y'], [7, 'r'], [8, 'y'], [11, 'y'], [14, 'm'], [15, 'y'], [16, 'y'], [24, 'p'], [26, 'y'], [27, 'o'], [30, 'b']])
  s += rect(Math.round(beatX(b)), 7, 2, 33, C[c]);
el('lane').innerHTML = s;
```
